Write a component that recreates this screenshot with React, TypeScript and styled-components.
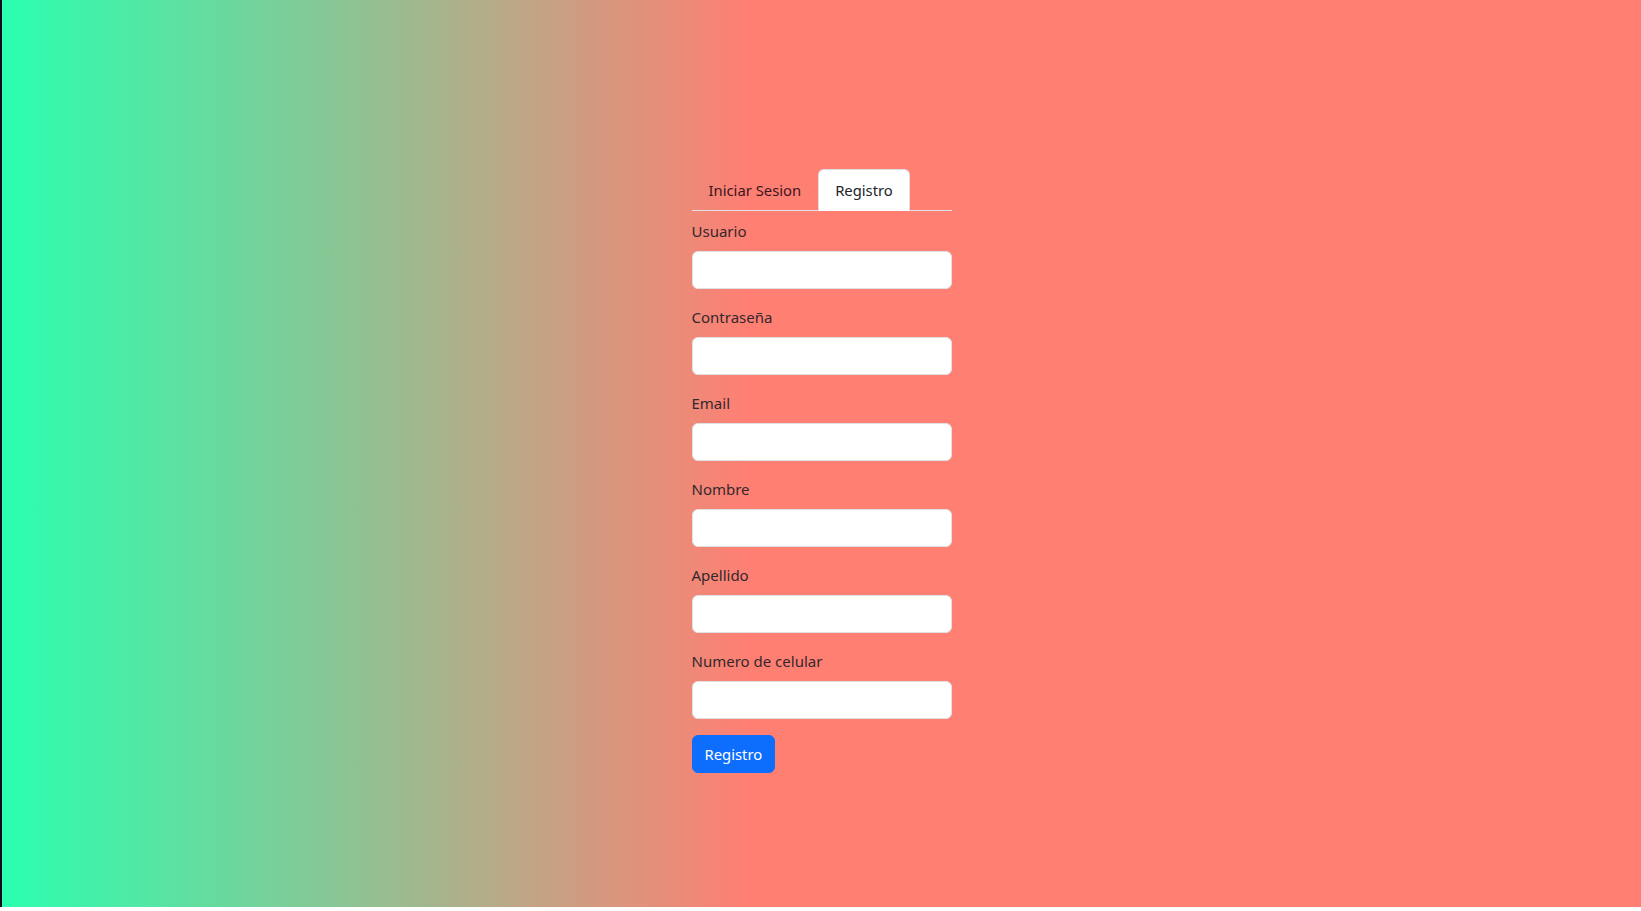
import React, { useState } from "react";
import styled, { createGlobalStyle } from "styled-components";

const GlobalStyle = createGlobalStyle`
  body {
    margin: 0;
    font-family: "Noto Sans", "Open Sans", sans-serif;
    background: #ffffff;
  }
  * {
    box-sizing: border-box;
  }
`;

const fields = [
  "Usuario",
  "Contraseña",
  "Email",
  "Nombre",
  "Apellido",
  "Numero de celular",
];

const App = () => {
  const [tab, setTab] = useState("registro");

  return (
    <>
      <GlobalStyle />
      <Page>
        <Column>
          <Tabs>
            <Tab active={tab === "login"} onClick={() => setTab("login")}>
              Iniciar Sesion
            </Tab>
            <Tab active={tab === "registro"} onClick={() => setTab("registro")}>
              Registro
            </Tab>
          </Tabs>
          <Form onSubmit={(e) => e.preventDefault()}>
            {fields.map((name) => (
              <Field key={name}>
                <Label>{name}</Label>
                <Input type={name === "Contraseña" ? "password" : "text"} />
              </Field>
            ))}
            <Button type="submit">Registro</Button>
          </Form>
        </Column>
      </Page>
    </>
  );
};

export default App;

const Page = styled.div`
  height: 907px;
  border-left: 2px solid #0b0b1e;
  background: linear-gradient(90deg, #2affb0 0%, #ff7f73 45.5%);
  display: flex;
  justify-content: center;
  padding-top: 169px;
`;
const Column = styled.div`
  width: 260px;
`;
const Tabs = styled.div`
  display: flex;
  border-bottom: 1px solid #dee2e6;
`;
const Tab = styled.button<{ active?: boolean }>`
  font-family: inherit;
  font-size: 14.8px;
  line-height: 24px;
  padding: 8px 16px;
  margin-bottom: -1px;
  border: 1px solid ${(p) => (p.active ? "#dee2e6" : "transparent")};
  border-bottom-color: ${(p) => (p.active ? "#ffffff" : "transparent")};
  border-top-left-radius: 6px;
  border-top-right-radius: 6px;
  background: ${(p) => (p.active ? "#ffffff" : "transparent")};
  color: ${(p) => (p.active ? "#212529" : "#3d141e")};
  cursor: pointer;
`;
const Form = styled.form`
  padding-top: 8px;
`;
const Field = styled.div`
  margin-bottom: 16px;
`;
const Label = styled.label`
  display: block;
  font-size: 15px;
  line-height: 24px;
  margin-bottom: 8px;
  color: #33282c;
`;
const Input = styled.input`
  display: block;
  width: 100%;
  height: 38px;
  padding: 6px 12px;
  font-size: 16px;
  border: 1px solid #dee2e6;
  border-radius: 6px;
  background: #ffffff;
  outline: none;
`;
const Button = styled.button`
  height: 38px;
  padding: 6px 12px;
  font-family: inherit;
  font-size: 14.8px;
  line-height: 24px;
  color: #ffffff;
  background: #0d6efd;
  border: 1px solid #0d6efd;
  border-radius: 6px;
  cursor: pointer;
`;
